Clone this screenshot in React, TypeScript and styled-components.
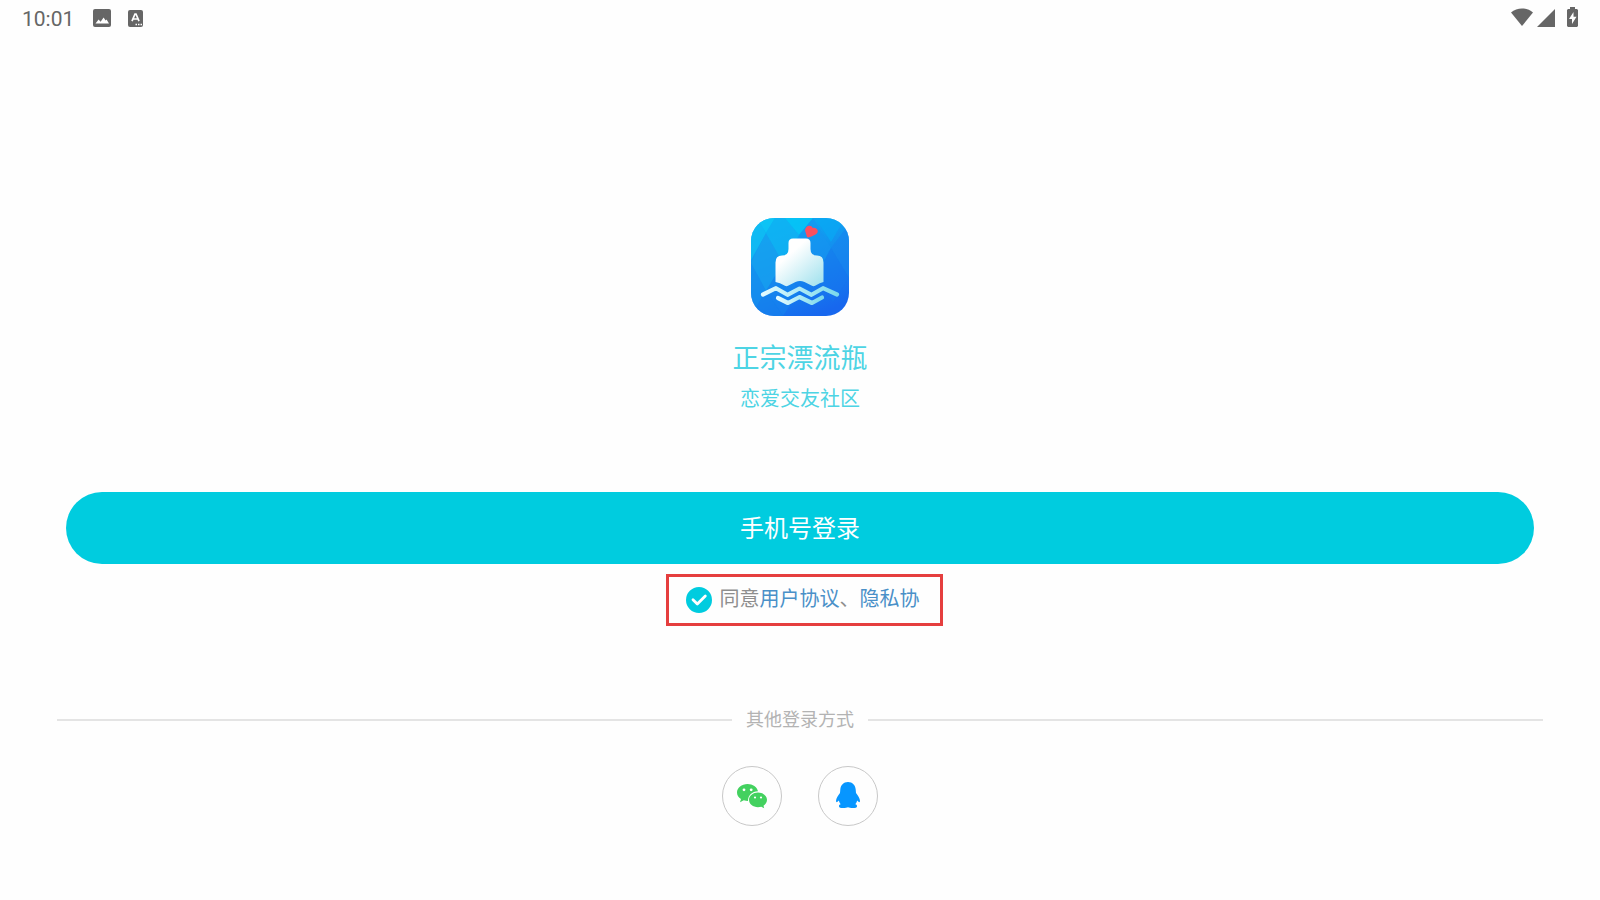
import React, { useState } from "react";
import styled, { createGlobalStyle } from "styled-components";

const GlobalStyle = createGlobalStyle`
  *, *::before, *::after { box-sizing: border-box; }
  body {
    margin: 0;
    background: #fefefe;
    font-family: Roboto, "Noto Sans CJK SC", sans-serif;
  }
`;

const Screen = styled.div`
  min-height: 100vh;
  display: flex;
  flex-direction: column;
`;

const StatusBar = styled.header`
  height: 36px;
  padding: 0 22px;
  display: flex;
  align-items: center;
  justify-content: space-between;
  color: #666;
`;

const StatusGroup = styled.div<{ $gap: number }>`
  display: flex;
  align-items: center;
  gap: ${(p) => p.$gap}px;
`;

const Clock = styled.time`
  font-size: 21px;
  line-height: 36px;
  padding-top: 2px;
`;

const Main = styled.main`
  display: flex;
  flex-direction: column;
  align-items: center;
  padding: 182px 57px 0;
`;

const AppTitle = styled.h1`
  margin: 23px 0 0;
  font-size: 27px;
  line-height: 40px;
  font-weight: 400;
  color: #4dd4e4;
`;

const Tagline = styled.p`
  margin: 5px 0 0;
  font-size: 20px;
  line-height: 30px;
  color: #4dd4e4;
`;

const LoginButton = styled.button`
  align-self: stretch;
  height: 72px;
  margin: 78px 9px 0;
  padding: 0 0 4px;
  border: 0;
  border-radius: 36px;
  background: #00ccdf;
  color: #fff;
  font-family: inherit;
  font-size: 24px;
  cursor: pointer;
`;

const Agreement = styled.div`
  display: flex;
  align-items: center;
  gap: 8px;
  height: 52px;
  margin: 10px 0 0 8px;
  padding: 0 20px 0 17px;
  border: 3px solid #e53e3e;
  font-size: 20px;
  line-height: 28px;
  color: #8e8e8e;
`;

const AgreementText = styled.span`
  padding-bottom: 2px;
`;

const CheckWrap = styled.span`
  display: grid;
  > * { grid-area: 1 / 1; }
  > svg { pointer-events: none; }
`;

const Checkbox = styled.input`
  appearance: none;
  width: 26px;
  height: 26px;
  margin: 0;
  border-radius: 50%;
  border: 2px solid #00ccdf;
  cursor: pointer;
  &:checked { background: #00ccdf; }
`;

const AgreementLink = styled.a`
  color: #4a90c8;
  text-decoration: none;
`;

const Divider = styled.div`
  align-self: stretch;
  display: flex;
  align-items: center;
  gap: 14px;
  margin-top: 80px;
  font-size: 18px;
  line-height: 28px;
  color: #b3b3b3;
  &::before, &::after {
    content: "";
    flex: 1;
    height: 2px;
    background: #e4e4e4;
  }
`;

const Providers = styled.div`
  display: flex;
  gap: 36px;
  margin-top: 32px;
`;

const ProviderButton = styled.button`
  width: 60px;
  height: 60px;
  padding: 0;
  display: grid;
  place-items: center;
  border: 1px solid #c8c8c8;
  border-radius: 50%;
  background: transparent;
  cursor: pointer;
`;

const PictureIcon = () => (
  <svg width="18" height="18" viewBox="0 0 18 18" aria-hidden="true">
    <rect width="18" height="18" rx="2" fill="#666" />
    <path d="M2.500 14.500 5.600 10.500l2 2.300 3-4.300 2 3 1-1 2.400 4z" fill="#fff" />
  </svg>
);

const LetterIcon = () => (
  <svg width="15" height="17" viewBox="0 0 15 17" aria-hidden="true">
    <rect width="15" height="17" rx="2" fill="#666" />
    <path d="M4 11.200 7 4h1l3 7.200M5.200 9h4.600" fill="none" stroke="#fff" strokeWidth="1.700" />
    <path d="M7.500 14.500H9M10 14.500h1.500M12.500 14.500H14" stroke="#fff" strokeWidth="1.300" />
  </svg>
);

const WifiIcon = () => (
  <svg width="24" height="20" viewBox="0 0 24 20" aria-hidden="true">
    <path d="M1 4.600C7-1 17-1 23 4.600L12 18z" fill="#666" />
  </svg>
);

const SignalIcon = () => (
  <svg width="18" height="18" viewBox="0 0 18 18" aria-hidden="true">
    <path d="M18 0v18H0z" fill="#666" />
  </svg>
);

const BatteryIcon = () => (
  <svg width="11" height="22" viewBox="0 0 11 22" aria-hidden="true">
    <path d="M3 0h5v2h2l1 1v16l-1 1H1l-1-1V3l1-1h2z" fill="#666" />
    <path d="M6.500 5 2 12h3v5l4.500-7.200h-3z" fill="#fff" />
  </svg>
);

const AppLogo = () => (
  <svg width="98" height="98" viewBox="0 0 98 98" role="img" aria-label="正宗漂流瓶">
    <defs>
      <linearGradient id="sea" x1="0.250" y1="0" x2="0.650" y2="1">
        <stop offset="0" stopColor="#0cb0f4" />
        <stop offset="0.500" stopColor="#148cee" />
        <stop offset="1" stopColor="#1767ee" />
      </linearGradient>
      <linearGradient id="glass" x1="0.100" y1="0.100" x2="0.900" y2="1">
        <stop offset="0.250" stopColor="#fff" />
        <stop offset="1" stopColor="#a3e2ee" />
      </linearGradient>
      <linearGradient id="foam" x1="0" y1="0" x2="1" y2="0">
        <stop offset="0" stopColor="#e2fbff" />
        <stop offset="1" stopColor="#7cd9ec" />
      </linearGradient>
      <clipPath id="tile"><rect width="98" height="98" rx="23" /></clipPath>
    </defs>
    <g clipPath="url(#tile)">
      <rect width="98" height="98" fill="url(#sea)" />
      <path d="M0 0h6l9 15L0 42z" fill="#10bef3" opacity=".8" />
      <path d="M6 0h18l-9 15z" fill="#0cc8f5" opacity=".8" />
      <path d="M15 15 32 45 15 73 0 45z" fill="#17a0ef" opacity=".8" />
      <path d="M0 45 15 73 0 98z" fill="#1590ee" opacity=".7" />
      <path d="M15 73 32 98H0z" fill="#1683ec" opacity=".6" />
      <path d="M24 0h10l14 17-16 28L15 15z" fill="#0fb4f2" opacity=".8" />
      <path d="M34 0h28L48 17z" fill="#04c8f6" opacity=".8" />
      <path d="M32 45 48 74 32 98 15 73z" fill="#1588ee" opacity=".5" />
      <path d="m62 0 18 30-16 30-16-43z" fill="#1695f0" opacity=".6" />
      <path d="M64 0h30L80 24z" fill="#08a8f3" opacity=".7" />
      <path d="m98 6-18 24 18 30z" fill="#1784ee" opacity=".6" />
      <path d="m80 30 18 30-16 24-18-24z" fill="#1676ee" opacity=".5" />
    </g>
    <path
      d="M43 20.500h12q4.500 0 4.500 4.500v6q0 6.500 6.500 6.500 6.500 0 6.500 7V64q-4 1-7 3-2.500 2-5 .5l-7-3.500q-4.500-2-9 0l-7 3.500q-2.500 1.500-5-.5-3-2-8-3V44.500q0-7 6.500-7 6.500 0 6.500-6.500v-6q0-4.500 4.500-4.500z"
      fill="url(#glass)"
    />
    <path
      d="M57 19.400c-.8 0-1-.5-1.200-1.200l-1.400-4.400c-.8-2.600.6-5.200 2.800-5.900 2-.6 3.700.3 4.500 2 1.700-.7 3.700.1 4.600 1.700 1 1.900.3 3.700-1.300 4.700l-4.500 2.300c-1 .5-2.500.8-3.500.8z"
      fill="#fb4f5f"
    />
    <g fill="none" stroke="url(#foam)" strokeWidth="4.200" strokeLinecap="round" strokeLinejoin="round">
      <path d="m12 76.500 13-6.300 11.500 6.600 12-6.300 12 6.300L72 70.200l14 6.300" />
      <path d="m27 80 10 5 11.500-6L61 85l10-5.500" />
    </g>
  </svg>
);

const TickIcon = () => (
  <svg width="26" height="26" viewBox="0 0 26 26" aria-hidden="true">
    <path d="m7 12.800 4.300 4.200 8-8" fill="none" stroke="#fff" strokeWidth="2.800" strokeLinecap="round" strokeLinejoin="round" />
  </svg>
);

const WeChatIcon = () => (
  <svg width="30" height="26" viewBox="0 0 30 26" aria-hidden="true">
    <path
      d="M10.500 1C4.700 1 0 4.700 0 9.500c0 2.800 1.500 5 4 6.500l-1 3.300 3.800-2c1.500.4 2.800.6 4.200.6C11 12.500 15 8.500 21 8.300 20 4 15.800 1 10.500 1z"
      fill="#43d15f"
    />
    <path
      d="M21 9.500c-5 0-9 3.300-9 7.300 0 4.100 4 7.400 9 7.400 1.200 0 2.300-.2 3.400-.5l2.800 1.600-.7-2.600c2.200-1.400 3.500-3.500 3.500-5.900 0-4-4-7.300-9-7.300z"
      fill="#43d15f"
    />
    <g fill="#fff">
      <circle cx="7" cy="6.800" r="1.400" />
      <circle cx="14.200" cy="6.800" r="1.400" />
      <circle cx="18" cy="14.500" r="1.100" />
      <circle cx="24" cy="14.500" r="1.100" />
    </g>
  </svg>
);

const QQIcon = () => (
  <svg width="24" height="28" viewBox="0 0 24 28" aria-hidden="true">
    <path
      d="M12 0C7.500 0 4.600 3.200 4.300 7.500L4 11C2 13.500.1 16.500 0 19c0 1.200.8 1.400 1.500.8l1.300-1.200c.3 1.400 1 2.600 1.900 3.600-1.300.4-1.900 1.200-1.700 2.200.2 1.300 1.500 1.600 4.300 1.600 2 0 3.600-.2 4.700-.7 1.100.5 2.700.7 4.700.7 2.800 0 4.100-.3 4.300-1.600.2-1-.4-1.800-1.700-2.200.9-1 1.600-2.200 1.900-3.600l1.300 1.200c.7.600 1.500.4 1.500-.8-.1-2.500-2-5.500-4-8l-.3-3.500C19.400 3.200 16.500 0 12 0z"
      fill="#0796ff"
    />
  </svg>
);

export default function App() {
  const [agreed, setAgreed] = useState(true);

  return (
    <>
      <GlobalStyle />
      <Screen>
        <StatusBar>
          <StatusGroup $gap={19}>
            <Clock>10:01</Clock>
            <StatusGroup $gap={17}>
              <PictureIcon />
              <LetterIcon />
            </StatusGroup>
          </StatusGroup>
          <StatusGroup $gap={12}>
            <StatusGroup $gap={3}>
              <WifiIcon />
              <SignalIcon />
            </StatusGroup>
            <BatteryIcon />
          </StatusGroup>
        </StatusBar>
        <Main>
          <AppLogo />
          <AppTitle>正宗漂流瓶</AppTitle>
          <Tagline>恋爱交友社区</Tagline>
          <LoginButton type="button">手机号登录</LoginButton>
          <Agreement>
            <CheckWrap>
              <Checkbox
                id="agree"
                type="checkbox"
                checked={agreed}
                onChange={(e) => setAgreed(e.target.checked)}
              />
              {agreed && <TickIcon />}
            </CheckWrap>
            <AgreementText>
              <label htmlFor="agree">同意</label>
              <AgreementLink href="#terms">用户协议</AgreementLink>、
              <AgreementLink href="#privacy">隐私协</AgreementLink>
            </AgreementText>
          </Agreement>
          <Divider>其他登录方式</Divider>
          <Providers>
            <ProviderButton type="button" aria-label="微信登录">
              <WeChatIcon />
            </ProviderButton>
            <ProviderButton type="button" aria-label="QQ登录">
              <QQIcon />
            </ProviderButton>
          </Providers>
        </Main>
      </Screen>
    </>
  );
}
